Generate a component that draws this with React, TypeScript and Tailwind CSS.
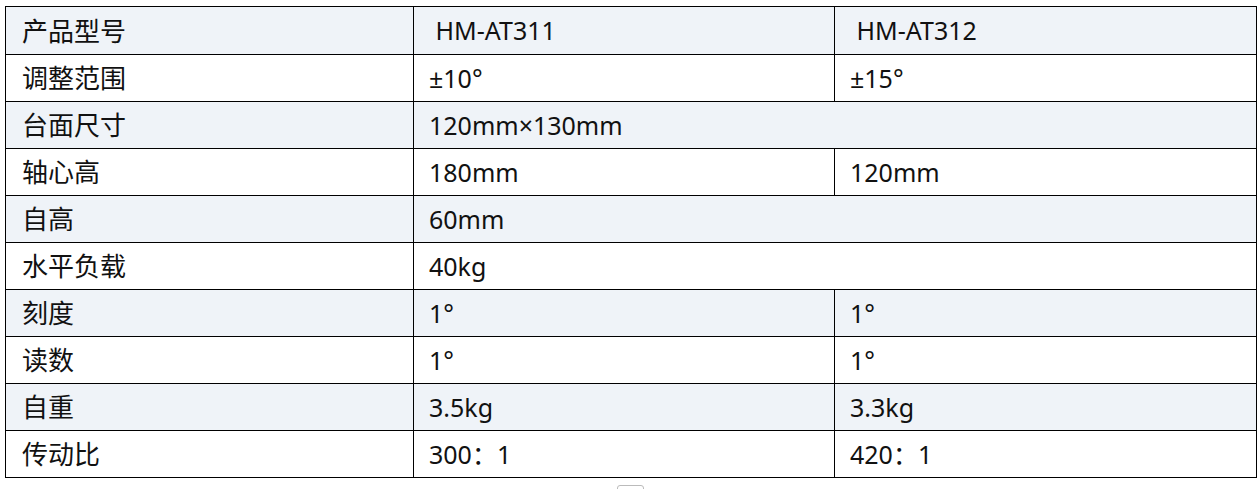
import React from 'react';

type Row = { label: string; a: string; b?: string };

const rows: Row[] = [
  { label: '产品型号', a: '\u00a0HM-AT311', b: '\u00a0HM-AT312' },
  { label: '调整范围', a: '±10°', b: '±15°' },
  { label: '台面尺寸', a: '120mm×130mm' },
  { label: '轴心高', a: '180mm', b: '120mm' },
  { label: '自高', a: '60mm' },
  { label: '水平负载', a: '40kg' },
  { label: '刻度', a: '1°', b: '1°' },
  { label: '读数', a: '1°', b: '1°' },
  { label: '自重', a: '3.5kg', b: '3.3kg' },
  { label: '传动比', a: '300：1', b: '420：1' },
];

export default function App() {
  return (
    <div className="bg-white min-h-[489px] pt-[6px] px-[5px] text-[#111] font-['Noto_Sans','Noto_Sans_CJK_SC',sans-serif] text-[25px]">
      <table className="w-[1251px] border-collapse table-fixed">
        <colgroup>
          <col className="w-[408px]" />
          <col className="w-[421px]" />
          <col className="w-[422px]" />
        </colgroup>
        <tbody>
          {rows.map((r, i) => (
            <tr key={r.label} className={i % 2 === 0 ? 'bg-[#eff3f8]' : 'bg-white'}>
              <td className={`border border-black pl-[16px] align-middle leading-none text-[26px] ${i === 0 ? 'h-[48px]' : 'h-[47px]'}`}>
                {r.label}
              </td>
              {r.b !== undefined ? (
                <>
                  <td className="border border-black pl-[15px] align-middle leading-none">{r.a}</td>
                  <td className="border border-black pl-[15px] align-middle leading-none">{r.b}</td>
                </>
              ) : (
                <td colSpan={2} className="border border-black pl-[15px] align-middle leading-none">
                  {r.a}
                </td>
              )}
            </tr>
          ))}
        </tbody>
      </table>
      <div className="flex justify-center mt-[7px]">
        <div className="w-[27px] h-[12px] border border-[#bbb] rounded-[3px] bg-white" />
      </div>
    </div>
  );
}
